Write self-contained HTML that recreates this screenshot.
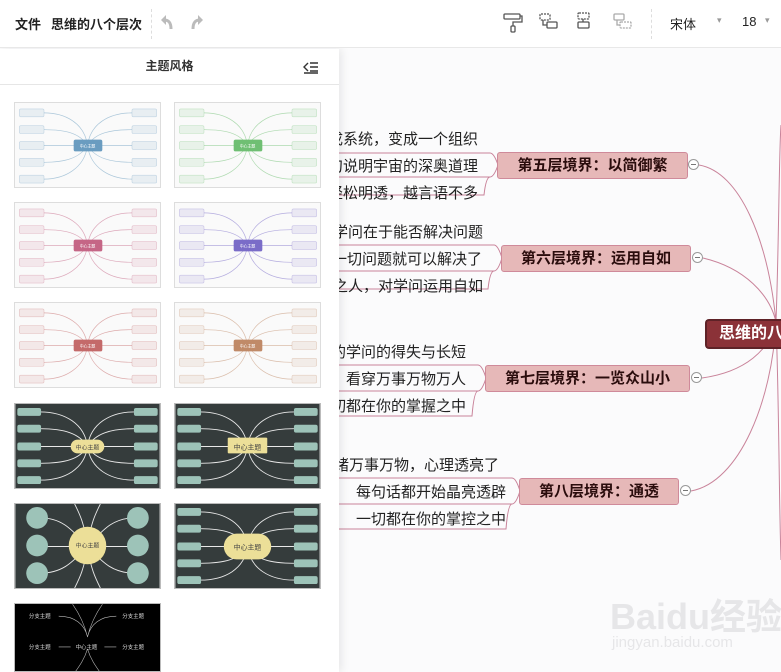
<!DOCTYPE html>
<html><head><meta charset="utf-8">
<style>
*{margin:0;padding:0;box-sizing:border-box}
html{width:781px;height:672px;overflow:hidden}
body{width:781px;height:672px;overflow:hidden;background:#fbfbfc;font-family:"Liberation Sans","Noto Sans CJK SC",sans-serif;position:relative}
.top{position:absolute;left:0;top:0;width:781px;height:48px;background:#fff;border-bottom:1px solid #e8e8e8;z-index:5}
.top .t{position:absolute;top:14px;font-size:13px;font-weight:bold;color:#222}
.sep{position:absolute;top:9px;width:0;height:30px;border-left:1px dashed #ddd}
.panel{position:absolute;left:0;top:49px;width:339px;height:623px;background:#fff;z-index:4;box-shadow:3px 0 8px rgba(0,0,0,.08)}
.ph{height:36px;border-bottom:1px solid #e6e6e6;text-align:center;font-size:12px;line-height:34px;color:#333;font-weight:bold}
.th{position:absolute;width:147px;height:86px;border:1px solid #ddd;background:#fafafa;overflow:hidden}
.th svg{display:block;width:145px;height:84px}
.row{position:absolute;font-size:15px;color:#222;white-space:nowrap;text-align:right}
.br{position:absolute;height:27px;background:#e6b8b8;border:1px solid #cf8a9a;border-radius:3px;font-size:15px;font-weight:bold;color:#2a0c0c;text-align:center;line-height:25px;white-space:nowrap;font-family:"Liberation Sans","Noto Sans CJK SC",sans-serif}
.cc{position:absolute;width:11px;height:11px;border:1px solid #999;border-radius:50%;background:#fff}
.cc:after{content:"";position:absolute;left:2px;top:4px;width:5px;height:1px;background:#777}
</style></head><body>
<div class="top">
<div class="t" style="left:15px">文件</div>
<div class="t" style="left:51px">思维的八个层次</div>
<div class="sep" style="left:151px"></div>
<svg style="position:absolute;left:158px;top:12px" width="56" height="22" viewBox="0 0 56 22"><path d="M13 17c0-6-2-9-7-9" fill="none" stroke="#bbb" stroke-width="3"/><path d="M3 8l5-5v10z" fill="#bbb"/><path d="M35 17c0-6 2-9 7-9" fill="none" stroke="#bbb" stroke-width="3"/><path d="M45 8l-5-5v10z" fill="#bbb"/></svg>
<svg style="position:absolute;left:500px;top:10px" width="140" height="26" viewBox="0 0 140 26" fill="none" stroke="#555" stroke-width="1.3">
<rect x="4" y="4" width="16" height="5" rx="1"/><path d="M20 6h2v6h-9v4"/><rect x="11" y="16" width="4" height="6" rx="1"/>
<rect x="40" y="4" width="10" height="6" rx="1" stroke-dasharray="2 1"/><path d="M43 10v5h4"/><rect x="47" y="12" width="10" height="6" rx="1"/>
<rect x="78" y="3" width="11" height="6" rx="1" stroke-dasharray="2 1"/><path d="M83 9v3"/><rect x="78" y="12" width="11" height="6" rx="1"/>
<g stroke="#aaa"><rect x="114" y="4" width="10" height="6" rx="1"/><path d="M117 10v5h3"/><rect x="120" y="12" width="11" height="6" rx="1" stroke-dasharray="2 1"/></g>
</svg>
<div class="sep" style="left:651px"></div>
<div style="position:absolute;left:670px;top:14px;font-size:13px;color:#222">宋体</div>
<div style="position:absolute;left:717px;top:15px;font-size:9px;color:#999">▾</div>
<div style="position:absolute;left:742px;top:14px;font-size:13px;color:#222">18</div>
<div style="position:absolute;left:765px;top:15px;font-size:9px;color:#999">▾</div>
</div>

<svg width="0" height="0" style="position:absolute">
<defs>
<g id="lt">
<g fill="none" stroke="currentColor" stroke-opacity=".55" stroke-width=".7">
<path d="M73 43C70 20 50 10 29 10M73 43C65 30 50 27 29 27M62 43H29M73 43C65 56 50 60 29 60M73 43C70 66 50 77 29 77"/>
<path d="M73 43C76 20 96 10 118 10M73 43C81 30 96 27 118 27M84 43H118M73 43C81 56 96 60 118 60M73 43C76 66 96 77 118 77"/>
</g>
<g fill="currentColor" fill-opacity=".12" stroke="currentColor" stroke-opacity=".35" stroke-width=".6">
<rect x="4" y="6" width="25" height="8" rx="1.5"/><rect x="4" y="23" width="25" height="8" rx="1.5"/><rect x="4" y="39" width="25" height="8" rx="1.5"/><rect x="4" y="56" width="25" height="8" rx="1.5"/><rect x="4" y="73" width="25" height="8" rx="1.5"/>
<rect x="118" y="6" width="25" height="8" rx="1.5"/><rect x="118" y="23" width="25" height="8" rx="1.5"/><rect x="118" y="39" width="25" height="8" rx="1.5"/><rect x="118" y="56" width="25" height="8" rx="1.5"/><rect x="118" y="73" width="25" height="8" rx="1.5"/>
</g>
<rect x="59" y="37" width="29" height="12" rx="2" fill="currentColor"/>
</g>
<g id="dk">
<rect width="146" height="85" fill="#353c3c"/>
<g fill="none" stroke="#e8e8e8" stroke-width=".9">
<path d="M73 43C70 20 50 8 25 8M73 43C65 30 50 25 25 25M62 43H25M73 43C65 56 50 60 25 60M73 43C70 66 50 77 25 77"/>
<path d="M73 43C76 20 96 8 120 8M73 43C81 30 96 25 120 25M84 43H120M73 43C81 56 96 60 120 60M73 43C76 66 96 77 120 77"/>
</g>
<g fill="#9dc3b8">
<rect x="2" y="4" width="24" height="8" rx="2"/><rect x="2" y="21" width="24" height="8" rx="2"/><rect x="2" y="39" width="24" height="8" rx="2"/><rect x="2" y="56" width="24" height="8" rx="2"/><rect x="2" y="73" width="24" height="8" rx="2"/>
<rect x="120" y="4" width="24" height="8" rx="2"/><rect x="120" y="21" width="24" height="8" rx="2"/><rect x="120" y="39" width="24" height="8" rx="2"/><rect x="120" y="56" width="24" height="8" rx="2"/><rect x="120" y="73" width="24" height="8" rx="2"/>
</g>
</g>
</defs></svg>

<div class="panel">
<div class="ph">主题风格</div>
<svg style="position:absolute;left:303px;top:11px" width="16" height="14" viewBox="0 0 16 14" fill="none" stroke="#333" stroke-width="1.4"><path d="M5 3L1 7l4 4M7 3h8M7 7h8M7 11h8M1 13h14"/></svg>
</div>
<div style="position:absolute;left:0;top:0;z-index:6">
<div class="th" style="left:14px;top:102px"><svg viewBox="0 0 146 85" style="color:#6a9cc0"><use href="#lt"/><text x="73" y="45" font-size="4" fill="#fff" text-anchor="middle">中心主题</text></svg></div>
<div class="th" style="left:174px;top:102px"><svg viewBox="0 0 146 85" style="color:#6fbf73"><use href="#lt"/><text x="73" y="45" font-size="4" fill="#fff" text-anchor="middle">中心主题</text></svg></div>
<div class="th" style="left:14px;top:202px"><svg viewBox="0 0 146 85" style="color:#c56686"><use href="#lt"/><text x="73" y="45" font-size="4" fill="#fff" text-anchor="middle">中心主题</text></svg></div>
<div class="th" style="left:174px;top:202px"><svg viewBox="0 0 146 85" style="color:#7a6cc8"><use href="#lt"/><text x="73" y="45" font-size="4" fill="#fff" text-anchor="middle">中心主题</text></svg></div>
<div class="th" style="left:14px;top:302px"><svg viewBox="0 0 146 85" style="color:#c46a6a"><use href="#lt"/><text x="73" y="45" font-size="4" fill="#fff" text-anchor="middle">中心主题</text></svg></div>
<div class="th" style="left:174px;top:302px"><svg viewBox="0 0 146 85" style="color:#c08a68"><use href="#lt"/><text x="73" y="45" font-size="4" fill="#fff" text-anchor="middle">中心主题</text></svg></div>
<div class="th" style="left:14px;top:403px;border-color:#bbb"><svg viewBox="0 0 146 85"><use href="#dk"/><rect x="56" y="36" width="34" height="14" rx="7" fill="#ecdf98"/><text x="73" y="46" font-size="6" fill="#444" text-anchor="middle">中心主题</text></svg></div>
<div class="th" style="left:174px;top:403px;border-color:#bbb"><svg viewBox="0 0 146 85"><use href="#dk"/><rect x="53" y="34" width="40" height="16" rx="1" fill="#ecdf98"/><text x="73" y="46" font-size="7" fill="#444" text-anchor="middle">中心主题</text></svg></div>
<div class="th" style="left:14px;top:503px;border-color:#bbb"><svg viewBox="0 0 146 85"><rect width="146" height="85" fill="#353c3c"/><g fill="none" stroke="#e8e8e8" stroke-width=".9"><path d="M73 43C60 30 50 14 25 14M73 43H25M73 43C60 56 50 70 25 70M73 43C86 30 96 14 121 14M73 43H121M73 43C86 56 96 70 121 70M60 0C65 10 70 20 73 43M86 0C81 10 76 20 73 43M60 85C65 75 70 65 73 43M86 85C81 75 76 65 73 43"/></g><g fill="#9dc3b8"><circle cx="22" cy="14" r="11"/><circle cx="22" cy="42" r="11"/><circle cx="22" cy="70" r="11"/><circle cx="124" cy="14" r="11"/><circle cx="124" cy="42" r="11"/><circle cx="124" cy="70" r="11"/></g><circle cx="73" cy="42" r="19" fill="#ecdf98"/><text x="73" y="44" font-size="6" fill="#444" text-anchor="middle">中心主题</text></svg></div>
<div class="th" style="left:174px;top:503px;border-color:#bbb"><svg viewBox="0 0 146 85"><use href="#dk"/><rect x="49" y="30" width="48" height="26" rx="13" fill="#ecdf98"/><text x="73" y="46" font-size="7" fill="#444" text-anchor="middle">中心主题</text></svg></div>
<div class="th" style="left:14px;top:603px;height:69px;border-color:#bbb;background:#000"><svg viewBox="0 0 146 69" style="height:69px"><rect width="146" height="69" fill="#000"/><g fill="none" stroke="#bbb" stroke-width=".6"><path d="M73 33C70 20 60 12 44 12M73 33C76 20 86 12 102 12M58 0C65 10 70 20 73 33M88 0C81 10 76 20 73 33M56 43H44M90 43H102M73 45C70 55 65 62 60 69M73 45C76 55 81 62 86 69"/></g><g fill="#ddd" font-size="5.5"><text x="14" y="14">分支主题</text><text x="108" y="14">分支主题</text><text x="14" y="45">分支主题</text><text x="61" y="45">中心主题</text><text x="108" y="45">分支主题</text></g></svg></div>
</div>

<svg style="position:absolute;left:0;top:0" width="781" height="672" fill="none" stroke="#c9839a" stroke-width="1">
<path d="M338 153H490q4 0 8 12q-4 12-8 12H338M490 177q-4 0-6 18H338"/>
<path d="M338 245H494q4 0 8 13q-4 13-8 13H338M494 271q-4 0-6 18H338"/>
<path d="M338 365H478q4 0 8 13q-4 13-8 13H338M478 391q-4 0-6 25H338"/>
<path d="M338 478H512q4 0 8 13q-4 13-8 13H338M512 504q-4 0-6 25H338"/>
<path d="M699 165C740 172 768 240 776 322M703 258C745 268 770 295 776 322M702 378C745 372 770 350 776 322M691 491C740 482 772 400 776 322M776 322C779 240 779 150 781 125M776 322C779 400 779 500 781 560"/>
</svg>

<div class="row" style="right:303px;top:128px">组成系统，变成一个组织</div>
<div class="row" style="right:303px;top:155px">每一句说明宇宙的深奥道理</div>
<div class="row" style="right:303px;top:182px">越轻松明透，越言语不多</div>
<div class="row" style="right:298px;top:221px">学问在于能否解决问题</div>
<div class="row" style="right:299px;top:248px">一切问题就可以解决了</div>
<div class="row" style="right:298px;top:275px">之人，对学问运用自如</div>
<div class="row" style="right:315px;top:341px">的学问的得失与长短</div>
<div class="row" style="right:315px;top:368px">，看穿万事万物万人</div>
<div class="row" style="right:315px;top:395px">切都在你的掌握之中</div>
<div class="row" style="right:282px;top:454px">统绪万事万物，心理透亮了</div>
<div class="row" style="left:356px;top:481px">每句话都开始晶亮透辟</div>
<div class="row" style="left:356px;top:508px">一切都在你的掌控之中</div>

<div class="br" style="left:497px;top:152px;width:191px">第五层境界：以简御繁</div>
<div class="br" style="left:501px;top:245px;width:190px">第六层境界：运用自如</div>
<div class="br" style="left:485px;top:365px;width:205px">第七层境界：一览众山小</div>
<div class="br" style="left:519px;top:478px;width:160px">第八层境界：通透</div>
<div class="cc" style="left:688px;top:159px"></div>
<div class="cc" style="left:692px;top:252px"></div>
<div class="cc" style="left:691px;top:372px"></div>
<div class="cc" style="left:680px;top:485px"></div>
<div style="position:absolute;left:705px;top:319px;width:76px;height:30px;overflow:hidden;background:#8b3238;border:2px solid #5e2227;border-right:none;border-radius:4px 0 0 4px;color:#fff;font-size:16px;font-weight:bold;line-height:26px;padding-left:12px;white-space:nowrap">思维的八个层次</div>

<div style="position:absolute;left:610px;top:588px;font-size:36px;font-weight:bold;color:#e6e6e8;white-space:nowrap">Baidu经验</div>
<div style="position:absolute;left:612px;top:634px;font-size:15px;color:#e6e6e8;white-space:nowrap">jingyan.baidu.com</div>
</body></html>
